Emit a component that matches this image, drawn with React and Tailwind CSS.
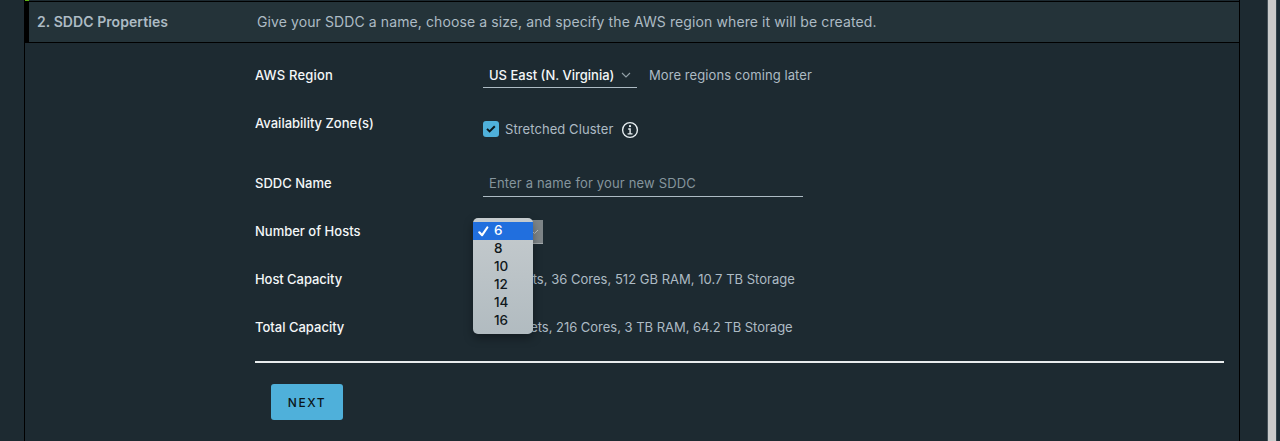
import React from "react";

const hostOptions = ["6", "8", "10", "12", "14", "16"];

function Label({ children, className = "" }) {
  return (
    <div className="w-[228px] shrink-0 font-medium leading-6 text-[#f4f7f8]">
      <span className={`whitespace-nowrap ${className}`}>{children}</span>
    </div>
  );
}

function Row({ label, labelClass, height = "h-12", children }) {
  return (
    <div className={`flex items-start pt-3 ${height}`}>
      <Label className={labelClass}>{label}</Label>
      {children}
    </div>
  );
}

function HostMenu() {
  return (
    <ul className="absolute -left-[10px] -top-[2px] z-10 h-[116px] w-[60px] rounded-[5px] bg-linear-to-b from-[#c5cbce] to-[#b1bbc0] pt-1 text-[13.5px] font-medium text-[#10181c] shadow-[0_4px_10px_rgba(0,0,0,0.35)]">
      {hostOptions.map((n, i) => (
        <li
          key={n}
          className={
            i === 0
              ? "flex h-[18px] items-center bg-[#216fde] leading-4 text-white"
              : "flex h-[18px] items-center leading-4"
          }
        >
          <span className="flex w-[21px] justify-center">
            {i === 0 && (
              <svg width="11" height="11" viewBox="0 0 11 11" fill="none">
                <path d="M1.3 6.3 4.1 9.2 9.3 1.5" stroke="white" strokeWidth="2.2" strokeLinecap="round" strokeLinejoin="round" />
              </svg>
            )}
          </span>
          <span className="-mt-0.5">{n}</span>
        </li>
      ))}
    </ul>
  );
}

export default function App() {
  return (
    <div className="flex h-[441px] w-[1280px] overflow-hidden bg-[#1d2a31] pl-6 font-['Inter',sans-serif] text-[13px] text-[#adbbc4]">
      <main className="flex w-[1216px] flex-col border-x border-black">
        <div className="h-px w-1 shrink-0 bg-[#60b515]" />
        <header className="flex h-[42px] shrink-0 items-center border-y border-l-4 border-black bg-[#243339] pb-0.5 pl-2">
          <h2 className="w-[220px] shrink-0 whitespace-nowrap text-[14px] font-semibold tracking-[0.07px]">2. SDDC Properties</h2>
          <p className="whitespace-nowrap text-[14px] tracking-[0.1px]">
            Give your SDDC a name, choose a size, and specify the AWS region where it will be created.
          </p>
        </header>

        <form className="ml-[230px] mr-[15px] mt-2">
          <Row label="AWS Region" labelClass="tracking-[0.18px]">
            <div className="flex h-[25px] w-[154px] items-start border-b border-[#adbbc4] pl-1.5 leading-6 text-[#f4f7f8]">
              <span className="w-[132px] whitespace-nowrap font-medium">US East (N. Virginia)</span>
              <svg className="mt-[9px]" width="10" height="7" viewBox="0 0 10 7" fill="none">
                <path d="m1 1 4 4 4-4" stroke="#93a1a8" strokeWidth="1.1" />
              </svg>
            </div>
            <span className="ml-3 whitespace-nowrap leading-6 tracking-[0.08px]">More regions coming later</span>
          </Row>
          <Row label="Availability Zone(s)" height="h-[60px]">
            <div className="mt-[6px] flex h-6 items-center">
              <span className="flex size-4 items-center justify-center rounded-[3px] bg-[#4fb0da]">
                <svg width="10" height="8" viewBox="0 0 10 8" fill="none">
                  <path d="M1 3.9 3.6 6.4 8.8 1.2" stroke="#0b1519" strokeWidth="2" />
                </svg>
              </span>
              <span className="-mt-px ml-1.5 w-[116px] whitespace-nowrap leading-6 tracking-[0.08px]">Stretched Cluster</span>
              <svg className="mt-px" width="18" height="18" viewBox="0 0 18 18" fill="none">
                <circle cx="9" cy="9" r="7.4" stroke="#e6edf0" strokeWidth="1.4" />
                <circle cx="9" cy="5.2" r="1.15" fill="#e6edf0" />
                <path d="M7.2 8h1.9v4.7M6.6 12.9h4.9" stroke="#e6edf0" strokeWidth="1.4" />
              </svg>
            </div>
          </Row>
          <Row label="SDDC Name">
            <div className="h-[26px] w-80 whitespace-nowrap border-b border-[#adbbc4] pl-1.5 leading-6 text-[#85959d]">
              <span className="tracking-[0.16px]">Enter a name for your new SDDC</span>
            </div>
          </Row>
          <Row label="Number of Hosts">
            <div className="relative mt-px flex h-6 w-[60px] items-center justify-end border-b border-[#a3a9ac] bg-[#7e8588] pr-1">
              <svg width="9" height="6" viewBox="0 0 9 6" fill="none">
                <path d="m1 1 3.5 3.5L8 1" stroke="#b9c0c4" />
              </svg>
              <HostMenu />
            </div>
          </Row>
          <Row label="Host Capacity" labelClass="tracking-[-0.06px]">
            <span className="whitespace-nowrap leading-6 tracking-[0.02px]">2 Sockets, 36 Cores, 512 GB RAM, 10.7 TB Storage</span>
          </Row>
          <Row label="Total Capacity">
            <span className="whitespace-nowrap leading-6 tracking-[-0.02px]">12 Sockets, 216 Cores, 3 TB RAM, 64.2 TB Storage</span>
          </Row>
          <div className="mt-[10px] h-0.5 bg-[#e8eced]" />
          <button
            type="button"
            className="ml-4 mt-[21px] h-9 w-[72px] rounded-[3px] bg-[#4fb0da] pt-0.5 text-[12px] font-medium tracking-[1.6px] text-[#0b1519]"
          >
            NEXT
          </button>
        </form>
      </main>
      <div className="ml-[27px] w-px bg-[#46525a]" />
      <div className="w-[8px] bg-[#cbcbcb]" />
      <div className="flex-1 border-l border-[#35454d] bg-[#1b2c35]" />
    </div>
  );
}
